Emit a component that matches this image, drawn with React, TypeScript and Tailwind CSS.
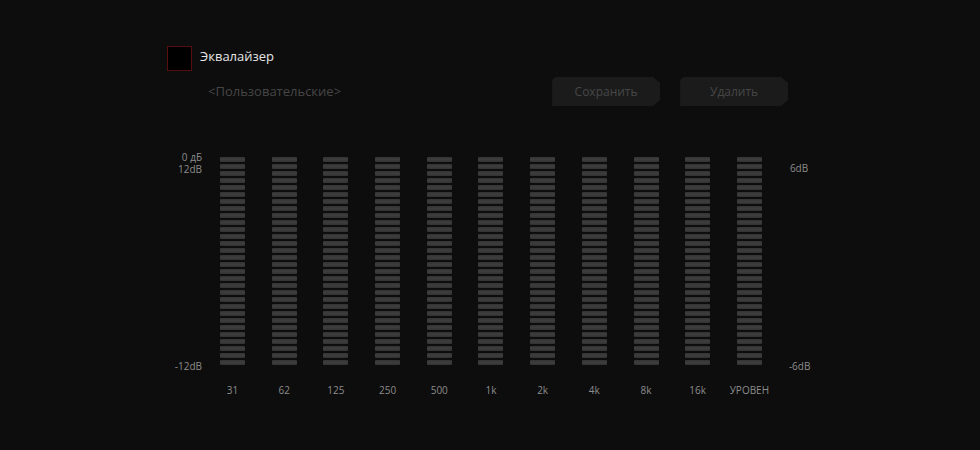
import React from "react";

const bands = ["31", "62", "125", "250", "500", "1k", "2k", "4k", "8k", "16k", "УРОВЕН"];
const segs = Array.from({ length: 30 }, (_, i) => i);

function Bar() {
  return (
    <div className="flex flex-col gap-[2px] w-[25px]">
      {segs.map((i) => (
        <div key={i} className="h-[5px] w-full rounded-[1px] bg-gradient-to-b from-[#343434] via-[#3d3d3d] to-[#323232]" />
      ))}
    </div>
  );
}

export default function App() {
  return (
    <div
      className="w-[980px] h-[450px] bg-[#0d0d0d] overflow-hidden"
      style={{ fontFamily: '"Open Sans", "Noto Sans", sans-serif' }}
    >
      <div className="pt-[46px] pl-[167px]">
        <div className="flex items-center">
          <div className="w-[25px] h-[25px] border border-[#580e0e] bg-black" />
          <span className="ml-[8px] text-[13px] text-[#e6e6e6] leading-none -mt-[5px]">Эквалайзер</span>
        </div>
        <div className="flex items-center mt-[6px]">
          <span className="ml-[41px] text-[13px] text-[#464646] leading-none -mt-[1px]">&lt;Пользовательские&gt;</span>
          <div className="ml-[211px] flex gap-[20px]">
            <div
              className="w-[108px] h-[29px] bg-[#1b1b1b] flex items-center justify-center text-[12px] text-[#474747] rounded-tl-[5px]"
              style={{ clipPath: "polygon(0 0, 101px 0, 108px 6px, 108px 23px, 101px 29px, 0 29px)" }}
            >
              Сохранить
            </div>
            <div
              className="w-[108px] h-[29px] bg-[#1b1b1b] flex items-center justify-center text-[12px] text-[#474747] rounded-tl-[5px]"
              style={{ clipPath: "polygon(0 0, 101px 0, 108px 6px, 108px 23px, 101px 29px, 0 29px)" }}
            >
              Удалить
            </div>
          </div>
        </div>
      </div>
      <div className="flex mt-[51px]">
        <div className="w-[202px] flex flex-col items-end h-[216px] text-[10px] text-[#8c8c8c] leading-[12px]">
          <span className="-mt-[6px]">0 дБ</span>
          <span>12dB</span>
          <span className="mt-auto mb-[1px]">-12dB</span>
        </div>
        <div className="ml-[18px] flex gap-[26.7px]">
          {bands.map((b) => (
            <div key={b} className="flex flex-col items-center w-[25px]">
              <Bar />
              <span className="mt-[20px] text-[10px] text-[#8c8c8c] leading-none whitespace-nowrap">{b}</span>
            </div>
          ))}
        </div>
        <div className="ml-[28px] flex flex-col h-[216px] text-[10px] text-[#8c8c8c] leading-[12px]">
          <span className="mt-[5px]">6dB</span>
          <span className="mt-auto mb-[1px] -ml-[1px]">-6dB</span>
        </div>
      </div>
    </div>
  );
}
